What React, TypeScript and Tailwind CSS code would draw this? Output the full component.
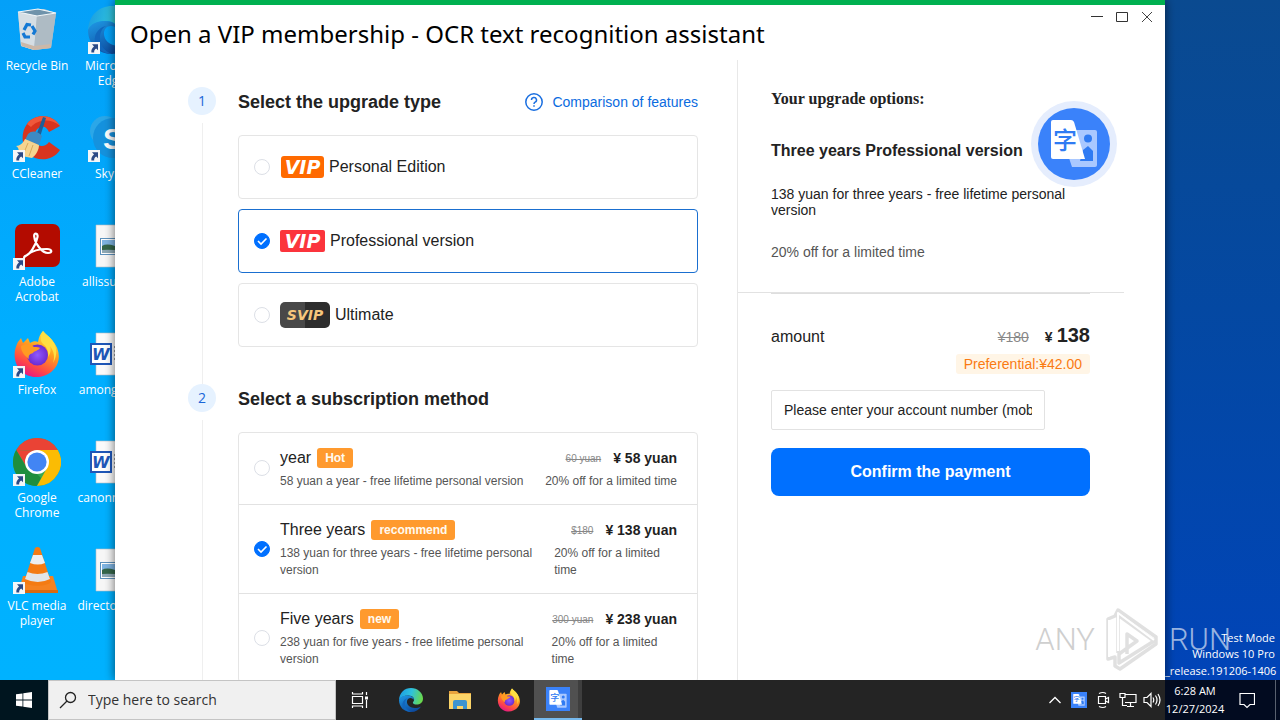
import { useState, type ReactNode } from "react";

function Shortcut() {
  return (
    <svg viewBox="0 0 12 12" className="absolute bottom-0 left-0 size-3" aria-hidden="true">
      <rect width="12" height="12" fill="#f4f6f8" />
      <path d="M4 2.2h6v6L8.200 6.500C6.600 7.600 6 8.800 6.200 10.600H3.400C3 8 4 6 6 4.400z" fill="#2b4a86" />
    </svg>
  );
}

function RecycleBin() {
  return (
    <svg viewBox="0 0 48 48" className="size-12" aria-hidden="true">
      <path d="M5 6l26-3 12 4-5 35-17 2-13-4z" fill="#b9c6cf" />
      <path d="M5 6l19 3-3 35-13-4z" fill="#d5dee4" />
      <path d="M24 9l19-2-5 35-17 2z" fill="#aebbc4" />
      <path d="M5 6l20-3 18 4-19 3z" fill="#6f93ab" stroke="#f2f7fa" strokeWidth="1.200" />
      <path d="M8 36l13 4 17-2-.6 4L21 44 8.500 40z" fill="#cbb8a8" />
      <g fill="none" stroke="#1479d4" strokeWidth="3.200">
        <path d="M11 24l3-5.500 4 .5" />
        <path d="M19 20l3 5-2 3.500" />
        <path d="M17 31h-5l-2-4" />
      </g>
    </svg>
  );
}

function CCleaner() {
  return (
    <svg viewBox="0 0 48 48" className="size-12" aria-hidden="true">
      <path d="M47 12C40 0 22-1 14 10s-5 28 8 34c9 3 19 1 25-8l-11-8c-4 6-12 5-14-1s1-13 6-14c4-1 6 1 8 5z" fill="#d8341f" />
      <path d="M47 12C40 0 22-1 14 10l4 3c7-8 20-9 29-1z" fill="#f0583b" />
      <path d="M30 3l3 1-6 19-4-1z" fill="#1d5f98" />
      <path d="M15 20c4-4 10-3 14 2l-3 9-14-5z" fill="#3c8ac4" />
      <path d="M12 25l14 6c0 5-3 10-7 13L3 41c5-4 2-8 0-9 4 0 7-3 9-7z" fill="#f5d490" />
      <path d="M15 29l-5 12M20 31l-4 11" stroke="#d9a95a" strokeWidth="1" />
    </svg>
  );
}

function Acrobat() {
  return (
    <svg viewBox="0 0 48 48" className="size-12" aria-hidden="true">
      <rect x="2" y="2" width="45" height="43" rx="7" fill="#b30b00" />
      <path
        d="M12 34c5-1 11-11 12.500-19 .7-4-3.800-5-3.300-.5C22 22 29 31 35 31c5 0 4-4-1-4-7 0-15 2-19.500 5.500-3 2.500-4.500 4-2.500 1.500z"
        fill="none"
        stroke="#fff"
        strokeWidth="2.200"
        strokeLinejoin="round"
      />
    </svg>
  );
}

function Firefox({ className }: { className: string }) {
  return (
    <svg viewBox="0 0 48 48" className={className} aria-hidden="true">
      <defs>
        <linearGradient id="fx-body" x1="0.8" y1="0" x2="0.3" y2="1">
          <stop offset="0" stopColor="#fff44f" />
          <stop offset="0.4" stopColor="#ffa01e" />
          <stop offset="0.750" stopColor="#ff4a45" />
          <stop offset="1" stopColor="#e31587" />
        </linearGradient>
        <radialGradient id="fx-core">
          <stop offset="0" stopColor="#9059ff" />
          <stop offset="1" stopColor="#6d2bd0" />
        </radialGradient>
      </defs>
      <path d="M30 1c3 4 6 5 9 9 8 9 9 20 3 28-7 9-20 12-30 6C2 38-1 25 4 14c1-3 3-4 4-6l2 5 5-5 2 5c3-2 6-2 8-1 1-5 2-8 5-11z" fill="url(#fx-body)" />
      <circle cx="24.500" cy="25" r="10.500" fill="url(#fx-core)" />
      <path d="M8 16c5-3 10-2 13 1 3 0 5 0 6 1-2 3-6 3-7 5-3 1-5 2-4 6-4-3-8-7-8-13z" fill="#ff9a22" />
      <path d="M30 1c-3 6-3 10 0 13 4 3 6 8 5 13 3-4 3-8 2-11 4 5 5 11 3 17 5-8 4-17-1-23-3-4-6-5-9-9z" fill="#ffdf43" />
    </svg>
  );
}

function Chrome() {
  return (
    <svg viewBox="0 0 48 48" className="size-12" aria-hidden="true">
      <circle cx="24" cy="24" r="24" fill="#34a853" />
      <path d="M3.200 12A24 24 0 0 1 44.800 12L24 13z" fill="#ea4335" />
      <path d="M3.200 12l11 18L24 13z" fill="#ea4335" />
      <path d="M44.800 12A24 24 0 0 1 24 48l10-18-10-18z" fill="#fbbc04" />
      <path d="M3.200 12l10.500 18L24 36l4 4-4.500 8A24 24 0 0 1 3.200 12z" fill="#1e8e3e" />
      <circle cx="24" cy="24" r="12" fill="#fff" />
      <circle cx="24" cy="24" r="9.600" fill="#4285f4" />
    </svg>
  );
}

function Vlc() {
  return (
    <svg viewBox="0 0 48 48" className="size-12" aria-hidden="true">
      <path d="M10 30h30l5 17H5z" fill="#f58220" />
      <path d="M5 44h40v3H5z" fill="#d96a10" />
      <path d="M22 2q2.500-2 5 0l11 34c-4 5-23 5-27 0z" fill="#f47b13" />
      <path d="M20 9h9l3 8q-7 3-15 0z" fill="#eceff1" />
      <path d="M14.500 26q10 4 20 0l2.500 7q-12 6-25 0z" fill="#e2e5e8" />
    </svg>
  );
}

function Edge({ className }: { className: string }) {
  return (
    <svg viewBox="0 0 48 48" className={className} aria-hidden="true">
      <defs>
        <linearGradient id="edge-top" x1="0" y1="0.3" x2="1" y2="0.5">
          <stop offset="0" stopColor="#1b9de2" />
          <stop offset="0.5" stopColor="#2fc2dc" />
          <stop offset="1" stopColor="#6ad94a" />
        </linearGradient>
        <linearGradient id="edge-low" x1="0" y1="0" x2="0.6" y2="1">
          <stop offset="0" stopColor="#1f9ae6" />
          <stop offset="1" stopColor="#0d4a9e" />
        </linearGradient>
      </defs>
      <path d="M0 24C1 9 11 0 24 0s24 10 24 21c0 8-6 12-13 12-6 0-9-3-6-6 4-6-2-12-10-12C10 15 3 18 0 24z" fill="url(#edge-top)" />
      <path d="M0 24c3-7 10-9 17-9s14 4 13 9c-1-2-4-4-7-4-7 0-9 8-5 14 5 7 17 8 26 3-4 7-11 11-20 11C10 48 0 38 0 24z" fill="url(#edge-low)" />
      <path d="M18 20c-8 4-10 22 6 28-10 0-19-8-17-17 1-6 6-10 11-11z" fill="#1267bd" />
    </svg>
  );
}

function Skype() {
  return (
    <svg viewBox="0 0 48 48" className="size-12" aria-hidden="true">
      <rect x="2" y="2" width="30" height="30" rx="15" fill="#2ba7e8" />
      <circle cx="25" cy="24" r="20" fill="#1592de" />
      <text x="15" y="35" fontFamily="Liberation Sans" fontWeight="700" fontSize="30" fill="#fff">S</text>
    </svg>
  );
}

function PictureFile() {
  return (
    <svg viewBox="0 0 48 48" className="size-12" aria-hidden="true">
      <path d="M8 3h32v42H8z" fill="#f7f7f7" stroke="#b8bec4" strokeWidth="0.600" />
      <rect x="12.500" y="16.500" width="23" height="16" fill="#fff" stroke="#5d92bd" />
      <rect x="14" y="18" width="20" height="13" fill="#7fb4e2" />
      <path d="M14 24q6-4 20 3v4H14z" fill="#35664a" />
      <path d="M14 28q8-1 20 1v2H14z" fill="#8fa9b5" />
    </svg>
  );
}

function WordFile() {
  return (
    <svg viewBox="0 0 48 48" className="size-12" aria-hidden="true">
      <path d="M8 3h32v42H8z" fill="#fbfbfb" stroke="#b8bec4" strokeWidth="0.600" />
      <path d="M26 17h10M26 21h10M26 25h10M26 29h10" stroke="#444" strokeDasharray="1 1" />
      <rect x="3" y="14" width="20" height="20" fill="#fff" stroke="#1f57b8" strokeWidth="2" />
      <text x="4" y="30" fontFamily="DejaVu Sans" fontWeight="700" fontStyle="italic" fontSize="16" fill="#1f57b8">W</text>
    </svg>
  );
}

function OcrMark({ className }: { className: string }) {
  return (
    <svg viewBox="0 0 48 48" className={className} aria-hidden="true">
      <path d="M24 10h21q2 0 2 2v33q0 2-2 2H22l-3-9z" fill="#a9c8ff" />
      <circle cx="38" cy="18.500" r="4" fill="#2f7bf3" />
      <path d="M33 30l5-4 5 5v10H30z" fill="#2f7bf3" />
      <path d="M3 0h18q2 0 3 2l11 37H3q-2 0-2-2V2q0-2 2-2z" fill="#fff" />
      <text x="3" y="29" fontFamily="Noto Sans CJK SC" fontWeight="500" fontSize="24" fill="#2f7bf3">字</text>
    </svg>
  );
}

const desktopItems: { label: string; icon: ReactNode; link: boolean }[] = [
  { label: "Recycle Bin", icon: <RecycleBin />, link: false },
  { label: "CCleaner", icon: <CCleaner />, link: true },
  { label: "Adobe Acrobat", icon: <Acrobat />, link: true },
  { label: "Firefox", icon: <Firefox className="size-12" />, link: true },
  { label: "Google Chrome", icon: <Chrome />, link: true },
  { label: "VLC media player", icon: <Vlc />, link: true },
  { label: "Microsoft Edge", icon: <Edge className="size-12" />, link: true },
  { label: "Skype", icon: <Skype />, link: true },
  { label: "allissu.png", icon: <PictureFile />, link: false },
  { label: "amonglo.rtf", icon: <WordFile />, link: false },
  { label: "canonnot.rtf", icon: <WordFile />, link: false },
  { label: "directory.jpg", icon: <PictureFile />, link: false },
];

function Radio({ name, checked, onChange }: { name: string; checked: boolean; onChange: () => void }) {
  return (
    <span className="grid size-4 shrink-0">
      <input
        type="radio"
        name={name}
        checked={checked}
        onChange={onChange}
        className="col-start-1 row-start-1 size-4 appearance-none rounded-full border border-[#dcdfe6] bg-white checked:border-[#0070ff] checked:bg-[#0070ff]"
      />
      {checked && (
        <svg viewBox="0 0 16 16" className="pointer-events-none z-10 col-start-1 row-start-1 size-4" aria-hidden="true">
          <path d="M4 8l3 3 5.500-5.500" fill="none" stroke="#fff" strokeWidth="1.600" />
        </svg>
      )}
    </span>
  );
}

const editions = [
  {
    name: "Personal Edition",
    badge: "VIP",
    style: "ml-px h-[22px] w-[43px] rounded-[3px] bg-[#ff6a00] text-[19px] text-white",
  },
  {
    name: "Professional version",
    badge: "VIP",
    style: "h-[22px] w-[45px] rounded-[2px] bg-[#fb343c] text-[19px] text-white",
  },
  {
    name: "Ultimate",
    badge: "SVIP",
    style: "h-[26px] w-[50px] rounded-[5px] bg-linear-to-r from-[#484848] from-50% to-[#2d2d2d] to-50% text-[14px] text-[#f6c67c]",
  },
];

const plans = [
  { name: "year", tag: "Hot", note: "58 yuan a year - free lifetime personal version", old: "60 yuan", price: "¥ 58 yuan" },
  { name: "Three years", tag: "recommend", note: "138 yuan for three years - free lifetime personal version", old: "$180", price: "¥ 138 yuan" },
  { name: "Five years", tag: "new", note: "238 yuan for five years - free lifetime personal version", old: "300 yuan", price: "¥ 238 yuan" },
];

function Step({ number, title, extra, children }: { number: number; title: string; extra?: ReactNode; children: ReactNode }) {
  return (
    <section className="flex gap-[22px]">
      <div className="flex w-7 shrink-0 flex-col items-center">
        <span className="flex size-7 items-center justify-center rounded-full bg-[#e6f2ff] font-['Open_Sans',sans-serif] text-sm text-[#1a66d8]">
          {number}
        </span>
        <span className="mt-2 w-px flex-1 bg-[#efefef]" />
      </div>
      <div className="min-w-0 flex-1 pb-[37px]">
        <div className="mb-[18px] flex h-[30px] items-center justify-between">
          <h2 className="text-lg font-bold text-[#222]">{title}</h2>
          {extra}
        </div>
        {children}
      </div>
    </section>
  );
}

function MembershipWindow() {
  const [edition, setEdition] = useState(1);
  const [plan, setPlan] = useState(1);
  return (
    <main className="z-10 flex min-w-0 flex-1 flex-col overflow-hidden border-t-[5px] border-[#00b050] bg-white shadow-[0_0_10px_rgba(0,0,0,0.6)]">
      <header className="flex h-[55px] shrink-0 items-start justify-between pl-[15px]">
        <h1 className="pt-3 font-['Noto_Sans',sans-serif] text-2xl leading-[34px] text-black">
          Open a VIP membership - OCR text recognition assistant
        </h1>
        <div className="flex gap-[13px] pt-[6px] pr-3">
          <button type="button" aria-label="Minimize" className="size-3">
            <svg viewBox="0 0 12 12" aria-hidden="true"><path d="M0 5.500h12" stroke="#333" /></svg>
          </button>
          <button type="button" aria-label="Maximize" className="size-3">
            <svg viewBox="0 0 12 12" aria-hidden="true"><path d="M.5 1.500h11v9H.5z" fill="none" stroke="#333" /></svg>
          </button>
          <button type="button" aria-label="Close" className="size-3">
            <svg viewBox="0 0 12 12" aria-hidden="true"><path d="M1 1l10 10M11 1L1 11" stroke="#444" /></svg>
          </button>
        </div>
      </header>

      <div className="flex min-h-0 flex-1 font-['Liberation_Sans',Arial,sans-serif]">
        <div className="min-w-0 flex-1 overflow-hidden border-r border-[#e8e8e8] pt-[27px] pr-[39px] pl-[73px]">
          <Step
            number={1}
            title="Select the upgrade type"
            extra={
              <a href="#features" className="flex items-center gap-2 text-sm text-[#0a6be0]">
                <svg viewBox="0 0 20 20" className="size-5" fill="none" stroke="#1a6fe0" strokeWidth="1.500" aria-hidden="true">
                  <circle cx="10" cy="10" r="8.200" />
                  <path d="M7.500 8a2.500 2.500 0 1 1 3.600 2.200c-.8.400-1.100.8-1.100 1.800M10 13.200v1.500" />
                </svg>
                Comparison of features
              </a>
            }
          >
            <div className="flex flex-col gap-[10px]">
              {editions.map((e, i) => (
                <label
                  key={e.name}
                  className={
                    "flex h-16 items-center rounded-[4px] border pl-[15px] " +
                    (edition === i ? "border-[#1a6fd0]" : "border-[#e5e5e5]")
                  }
                >
                  <Radio name="edition" checked={edition === i} onChange={() => setEdition(i)} />
                  <span className="ml-[10px] flex items-center gap-[5px] text-base text-[#222]">
                    <span className={"flex items-center justify-center font-['DejaVu_Sans',sans-serif] leading-none font-bold italic " + e.style}>
                      {e.badge}
                    </span>
                    {e.name}
                  </span>
                </label>
              ))}
            </div>
          </Step>

          <Step number={2} title="Select a subscription method">
            <div className="rounded-[4px] border border-[#e5e5e5]">
              {plans.map((p, i) => (
                <label key={p.name} className="flex items-center border-b border-[#e2e2e2] pt-[13px] pr-5 pb-[14px] pl-[15px] last:border-b-0">
                  <Radio name="plan" checked={plan === i} onChange={() => setPlan(i)} />
                  <span className="ml-[10px] min-w-0 flex-1">
                    <span className="flex h-6 items-center">
                      <span className="text-base text-[#222]">{p.name}</span>
                      <span className="ml-[6px] rounded-[3px] bg-[#ff9a2e] px-2 text-xs leading-5 font-bold text-[#fffaf0]">{p.tag}</span>
                      <s className="mr-3 ml-auto text-[10px] text-[#888]">{p.old}</s>
                      <span className="text-sm font-bold text-[#1f1f1f]">{p.price}</span>
                    </span>
                    <span className="mt-[3px] flex justify-between text-xs leading-[17px] text-[#555]">
                      <span>{p.note}</span>
                      <span>20% off for a limited time</span>
                    </span>
                  </span>
                </label>
              ))}
            </div>
          </Step>
        </div>

        <aside className="w-[427px] shrink-0 text-[#222]">
          <div className="mr-[41px] flex h-[233px] items-start justify-between border-b border-[#e2e2e2] pl-[33px]">
            <div className="w-[320px]">
              <h2 className="pt-[29px] font-['Liberation_Serif',serif] text-base leading-5 font-bold">Your upgrade options:</h2>
              <h3 className="mt-8 text-base leading-5 font-bold whitespace-nowrap">Three years Professional version</h3>
              <p className="mt-[25px] text-sm leading-4">138 yuan for three years - free lifetime personal version</p>
              <p className="mt-[26px] text-sm leading-4 text-[#555]">20% off for a limited time</p>
            </div>
            <div className="mt-[41px] mr-[7px] -ml-[60px] flex size-[86px] shrink-0 items-center justify-center rounded-full bg-[#e5edfd]">
              <div className="flex size-[72px] items-center justify-center rounded-full bg-[#3a82fa]">
                <OcrMark className="size-12" />
              </div>
            </div>
          </div>

          <form className="mr-[75px] ml-[33px] border-t border-[#dedede]" onSubmit={(ev) => ev.preventDefault()}>
            <div className="flex items-baseline pt-[29px] leading-6">
              <span className="text-base">amount</span>
              <s className="ml-auto text-sm text-[#888]">¥180</s>
              <span className="ml-4 text-sm font-bold">¥</span>
              <span className="ml-1 text-xl leading-6 font-bold">138</span>
            </div>
            <div className="mt-[5px] flex justify-end">
              <span className="rounded-[3px] bg-[#fff5e6] px-2 text-sm leading-5 text-[#fa7a12]">Preferential:¥42.00</span>
            </div>
            <input
              type="text"
              aria-label="Account number"
              placeholder="Please enter your account number (mobile number)"
              className="mt-4 block h-10 w-[274px] rounded-[2px] border border-[#e2e2e2] px-3 text-sm text-[#222] placeholder:text-[#222]"
            />
            <button type="submit" className="mt-[18px] h-12 w-full rounded-lg bg-[#0070ff] text-base font-bold text-white">
              Confirm the payment
            </button>
          </form>
        </aside>
      </div>
    </main>
  );
}

function Watermark() {
  return (
    <div
      className="pointer-events-none absolute right-[49px] bottom-[7px] z-20 flex h-[66px] items-center font-['Roboto',sans-serif] text-[31px] font-light"
      aria-hidden="true"
    >
      <span className="text-[#cfcfcf]">ANY</span>
      <svg viewBox="0 0 56 66" className="mx-[9px] h-[66px] w-14" fill="none" strokeLinejoin="round">
        <path d="M4 52V12l7-3 3-6 38 27v7L16 62l-5-3V50zM14 46V8l36 26-35 22v-9l18-13-10-7v20" stroke="#d8d8d8" strokeWidth="3.500" opacity="0.800" />
        <path d="M5 50V13M14 44V6l36 27" stroke="#fff" strokeWidth="2" />
      </svg>
      <span className="text-white/60">RUN</span>
    </div>
  );
}

function Taskbar() {
  return (
    <footer className="z-20 flex h-10 shrink-0 bg-[linear-gradient(to_right,#242424_calc(100%-115px),#020b20_calc(100%-115px))] font-['Open_Sans',sans-serif] text-white">
      <button type="button" aria-label="Start" className="flex w-12 items-center justify-center bg-[#00151f]">
        <svg viewBox="0 0 16 16" className="size-4" fill="#fff" aria-hidden="true">
          <path d="M0 2.300l6.500-.9v6.200H0zM7.300 1.200L16 0v7.600H7.300zM0 8.400h6.500v6.200L0 13.700zM7.300 8.400H16V16l-8.700-1.200z" />
        </svg>
      </button>
      <label className="flex w-72 items-center gap-[11px] border border-[#c4c4c4] bg-[#f0f0f0] pl-[10px]">
        <svg viewBox="0 0 18 18" className="size-[18px] shrink-0" fill="none" stroke="#222" strokeWidth="1.300" aria-hidden="true">
          <circle cx="11.500" cy="6.500" r="5" />
          <path d="M8 10l-7 7" />
        </svg>
        <input type="text" aria-label="Search" placeholder="Type here to search" className="min-w-0 flex-1 bg-transparent text-sm text-black placeholder:text-[#333]" />
      </label>
      <nav className="flex" aria-label="Pinned apps">
        <button type="button" aria-label="Task view" className="flex w-12 items-center justify-center">
          <svg viewBox="0 0 18 18" className="size-[18px]" fill="none" stroke="#fff" strokeWidth="1.200" aria-hidden="true">
            <path d="M1.500 5.500h10v7h-10zM1.500 1v2h10V1M1.500 17v-2h10v2M15.500 1v3M15.500 9v8" />
            <path d="M14 5.500h3v3h-3z" fill="#fff" stroke="none" />
          </svg>
        </button>
        <button type="button" aria-label="Edge" className="ml-[3px] flex w-12 items-center justify-center">
          <Edge className="size-6" />
        </button>
        <button type="button" aria-label="File Explorer" className="flex w-[49px] items-center justify-center">
          <svg viewBox="0 0 22 20" className="h-5 w-[22px]" aria-hidden="true">
            <path d="M0 1h8l2 2h12v16H0z" fill="#e8a33d" />
            <path d="M0 4h22v15H0z" fill="#fbd468" />
            <path d="M4 19v-7q0-2 2-2h10q2 0 2 2v7h-4v-3H8v3z" fill="#3d94cf" />
          </svg>
        </button>
        <button type="button" aria-label="Firefox" className="flex w-[49px] items-center justify-center">
          <Firefox className="size-6" />
        </button>
        <button
          type="button"
          aria-label="OCR text recognition assistant"
          className="ml-px flex w-12 items-center justify-center border-b-2 border-[#76b9ed] bg-[linear-gradient(to_right,#505050_44px,#3e3e3e_44px)]"
        >
          <span className="flex size-6 items-center justify-center bg-[#3a82fa]">
            <OcrMark className="size-[18px]" />
          </span>
        </button>
      </nav>
      <div className="ml-auto flex items-center">
        <svg viewBox="0 0 14 14" className="size-[14px]" fill="none" stroke="#fff" strokeWidth="1.300" aria-hidden="true">
          <path d="M1.500 10L7 4.500l5.500 5.500" />
        </svg>
        <span className="ml-[9px] flex size-4 items-center justify-center bg-[#3a82fa]">
          <OcrMark className="size-3" />
        </span>
        <svg viewBox="0 0 16 18" className="ml-2 h-[18px] w-4" fill="none" stroke="#fff" strokeWidth="1.200" aria-hidden="true">
          <path d="M3.500 5.500h7v7h-7zM10.500 8l3-1.500v5l-3-1.500M4 2.500q4-2 7 0M4 15.500q4 2 7 0" />
        </svg>
        <svg viewBox="0 0 18 16" className="ml-2 h-4 w-[18px]" fill="none" stroke="#fff" strokeWidth="1.200" aria-hidden="true">
          <path d="M6 2.500h11v8H6M8 14.500h7M11.500 10.500v4M1 1.500h5v4H1zM3.500 5.500v8H8" />
        </svg>
        <svg viewBox="0 0 18 16" className="ml-[6px] h-4 w-[18px]" fill="none" stroke="#fff" strokeWidth="1.200" aria-hidden="true">
          <path d="M1 5.500h3l4-4v13l-4-4H1zM10 5.500q1.500 2.500 0 5M12.500 3.500q3 4.500 0 9M15 2q4 6 0 12" />
        </svg>
        <div className="ml-[5px] flex w-[58px] flex-col items-center text-[11px] leading-[18px] whitespace-nowrap">
          <span>6:28 AM</span>
          <span>12/27/2024</span>
        </div>
        <button type="button" aria-label="Notifications" className="ml-[15px]">
          <svg viewBox="0 0 16 18" className="h-[18px] w-4" fill="none" stroke="#fff" strokeWidth="1.200" aria-hidden="true">
            <path d="M1 2.500h14.500v11H11l-3 3-3-3H1z" />
          </svg>
        </button>
        <span className="ml-5 h-10 w-px bg-[#59616f]" />
        <span className="w-1" />
      </div>
    </footer>
  );
}

export default function App() {
  return (
    <div className="flex h-screen flex-col overflow-hidden bg-[#0044b8]">
      <div className="relative flex min-h-0 flex-1">
        <div className="w-[115px] shrink-0 overflow-hidden bg-linear-to-b from-[#04a0f8] via-[#00aeff] to-[#00b2ff]">
          <ul className="grid w-[150px] grid-flow-col grid-cols-[74px_75px] grid-rows-[repeat(6,108px)] pt-[6px] font-['Open_Sans',sans-serif] text-xs leading-[15px] text-white">
            {desktopItems.map((item) => (
              <li key={item.label} className="flex flex-col items-center text-center">
                <span className="relative size-12">
                  {item.icon}
                  {item.link && <Shortcut />}
                </span>
                <span className="mt-1 w-[68px]">{item.label}</span>
              </li>
            ))}
          </ul>
        </div>
        <MembershipWindow />
        <div className="flex w-[115px] shrink-0 flex-col justify-end bg-linear-to-b from-[#0a4a90] to-[#0144b8] pr-[5px] text-right font-['Open_Sans',sans-serif] text-[11px] text-white">
          <p className="leading-4">Test Mode</p>
          <p className="leading-4">Windows 10 Pro</p>
          <p className="leading-[18px] whitespace-nowrap">_release.191206-1406</p>
        </div>
        <Watermark />
      </div>
      <Taskbar />
    </div>
  );
}
